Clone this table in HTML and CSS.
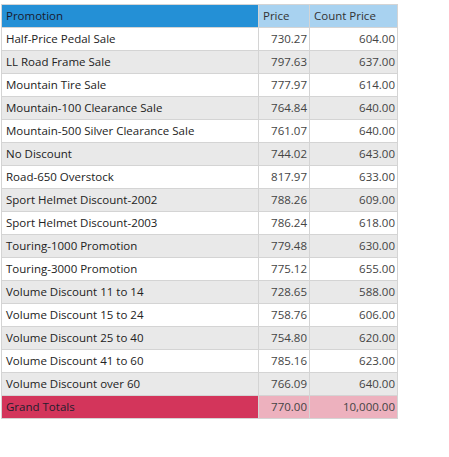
FILE: index.html
```html
<!DOCTYPE html>
<html>
<head>
<meta charset="utf-8">
<link rel="stylesheet" href="styles.css">
</head>
<body>
<table class="grid">
  <colgroup>
    <col class="c-name"><col class="c-price"><col class="c-count">
  </colgroup>
  <thead>
    <tr><th class="h-main">Promotion</th><th class="h-sub">Price</th><th class="h-sub">Count Price</th></tr>
  </thead>
  <tbody>
    <tr><td>Half-Price Pedal Sale</td><td class="num">730.27</td><td class="num">604.00</td></tr>
    <tr class="alt"><td>LL Road Frame Sale</td><td class="num">797.63</td><td class="num">637.00</td></tr>
    <tr><td>Mountain Tire Sale</td><td class="num">777.97</td><td class="num">614.00</td></tr>
    <tr class="alt"><td>Mountain-100 Clearance Sale</td><td class="num">764.84</td><td class="num">640.00</td></tr>
    <tr><td>Mountain-500 Silver Clearance Sale</td><td class="num">761.07</td><td class="num">640.00</td></tr>
    <tr class="alt"><td>No Discount</td><td class="num">744.02</td><td class="num">643.00</td></tr>
    <tr><td>Road-650 Overstock</td><td class="num">817.97</td><td class="num">633.00</td></tr>
    <tr class="alt"><td>Sport Helmet Discount-2002</td><td class="num">788.26</td><td class="num">609.00</td></tr>
    <tr><td>Sport Helmet Discount-2003</td><td class="num">786.24</td><td class="num">618.00</td></tr>
    <tr class="alt"><td>Touring-1000 Promotion</td><td class="num">779.48</td><td class="num">630.00</td></tr>
    <tr><td>Touring-3000 Promotion</td><td class="num">775.12</td><td class="num">655.00</td></tr>
    <tr class="alt"><td>Volume Discount 11 to 14</td><td class="num">728.65</td><td class="num">588.00</td></tr>
    <tr><td>Volume Discount 15 to 24</td><td class="num">758.76</td><td class="num">606.00</td></tr>
    <tr class="alt"><td>Volume Discount 25 to 40</td><td class="num">754.80</td><td class="num">620.00</td></tr>
    <tr><td>Volume Discount 41 to 60</td><td class="num">785.16</td><td class="num">623.00</td></tr>
    <tr class="alt"><td>Volume Discount over 60</td><td class="num">766.09</td><td class="num">640.00</td></tr>
  </tbody>
  <tfoot>
    <tr><td class="t-main">Grand Totals</td><td class="num t-sub">770.00</td><td class="num t-sub">10,000.00</td></tr>
  </tfoot>
</table>
</body>
</html>
```

FILE: styles.css
```css
html, body {
  margin: 0;
  padding: 0;
  background: #ffffff;
}
body {
  padding: 4px 0 0 1px;
  font-family: "Open Sans", "Noto Sans", sans-serif;
  font-size: 11.5px;
  color: #222;
}
.grid {
  border-collapse: collapse;
  table-layout: fixed;
  width: 396px;
}
.c-name { width: 257px; }
.c-price { width: 51px; }
.c-count { width: 88px; }
.grid th, .grid td {
  border: 1px solid #d4d4d4;
  height: 22px;
  padding: 0 2px 0 4px;
  box-sizing: border-box;
  font-weight: normal;
  text-align: left;
  white-space: nowrap;
  overflow: hidden;
  line-height: 22px;
}
.grid tr > * { height: 23px; }
.h-main { background: #2490d6; color: #1a1a2e; }
.h-sub { background: #a8d2f0; color: #333; }
.alt td { background: #e9e9e9; }
.num { text-align: right !important; color: #444; }
.t-main { background: #d3355b; color: #1e1e2e; }
.t-sub { background: #edb1be; }
```
